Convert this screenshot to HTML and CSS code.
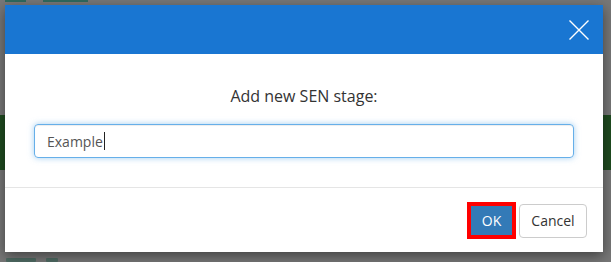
FILE: index.html
```html
<!DOCTYPE html>
<html>
<head>
<meta charset="utf-8">
<link rel="stylesheet" href="styles.css">
</head>
<body>
<div class="page">
  <div class="topbar">
    <span class="tb-btn tb-small"></span>
    <span class="tb-btn tb-wide"></span>
  </div>
  <div class="band"></div>
  <div class="below">
    <span class="blur b1"></span>
    <span class="blur b2"></span>
  </div>
</div>

<div class="modal">
  <div class="modal-header">
    <svg class="close" width="20" height="20" viewBox="0 0 20 20">
      <path d="M0.5 0.5 L19.5 19.5 M19.5 0.5 L0.5 19.5" stroke="#ffffff" stroke-width="1.4" fill="none"/>
    </svg>
  </div>
  <div class="modal-body">
    <div class="title">Add new SEN stage:</div>
    <div class="field"><span class="value">Example</span><span class="caret"></span></div>
  </div>
  <div class="modal-footer">
    <button class="btn btn-ok">OK</button>
    <button class="btn btn-cancel">Cancel</button>
  </div>
</div>
</body>
</html>
```
FILE: styles.css
```css
html, body {
  margin: 0;
  padding: 0;
}
body {
  width: 611px;
  height: 262px;
  overflow: hidden;
  background: #777777;
  font-family: "Open Sans", "Liberation Sans", sans-serif;
  position: relative;
}
.page {
  display: flex;
  flex-direction: column;
}
.topbar {
  height: 2px;
  display: flex;
  gap: 17px;
  padding-left: 5px;
}
.tb-btn {
  display: block;
  height: 2px;
  background: #2f6a5e;
}
.tb-small { width: 21px; }
.tb-wide { width: 45px; }
.band {
  margin-top: 113px;
  height: 55px;
  background: #1f4b20;
}
.below {
  margin-top: 88px;
  padding-left: 6px;
  display: flex;
  gap: 10px;
}
.blur {
  display: block;
  height: 4px;
  background: #4f6b63;
  border-radius: 1px;
}
.b1 { width: 30px; }
.b2 { width: 12px; }
.modal {
  position: absolute;
  left: 5px;
  top: 5px;
  width: 598px;
  height: 247px;
  background: #ffffff;
  box-shadow: 0 4px 12px rgba(0, 0, 0, 0.45);
  display: flex;
  flex-direction: column;
}
.modal-header {
  height: 49px;
  background: #1976d2;
  display: flex;
  justify-content: flex-end;
  align-items: flex-start;
  padding-right: 14px;
}
.close {
  margin-top: 15px;
  display: block;
}
.modal-body {
  padding: 31px 29px 29px 29px;
  display: flex;
  flex-direction: column;
}
.title {
  font-size: 16px;
  line-height: 22px;
  color: #333333;
  text-align: center;
}
.field {
  margin-top: 17px;
  height: 34px;
  box-sizing: border-box;
  border: 1px solid #66afe9;
  border-radius: 4px;
  box-shadow: inset 0 1px 1px rgba(0,0,0,.075), 0 0 6px rgba(102, 175, 233, 0.6);
  padding: 0 12px;
  display: flex;
  align-items: center;
  font-size: 14px;
  color: #555555;
}
.caret {
  display: inline-block;
  width: 1px;
  height: 18px;
  background: #222222;
  margin-left: 1px;
}
.modal-footer {
  border-top: 1px solid #e5e5e5;
  padding: 14px 16px 13px 0;
  display: flex;
  justify-content: flex-end;
  align-items: center;
  gap: 3px;
}
.btn {
  font-family: "Open Sans", "Liberation Sans", sans-serif;
  font-size: 14px;
  margin: 0;
  cursor: pointer;
}
.btn-ok {
  width: 49px;
  height: 37px;
  border: 4px solid #ff0000;
  background: #337ab7;
  color: #ffffff;
  padding: 0;
}
.btn-cancel {
  width: 68px;
  height: 34px;
  border: 1px solid #cccccc;
  border-radius: 4px;
  background: #ffffff;
  color: #333333;
  padding: 0;
}
```
